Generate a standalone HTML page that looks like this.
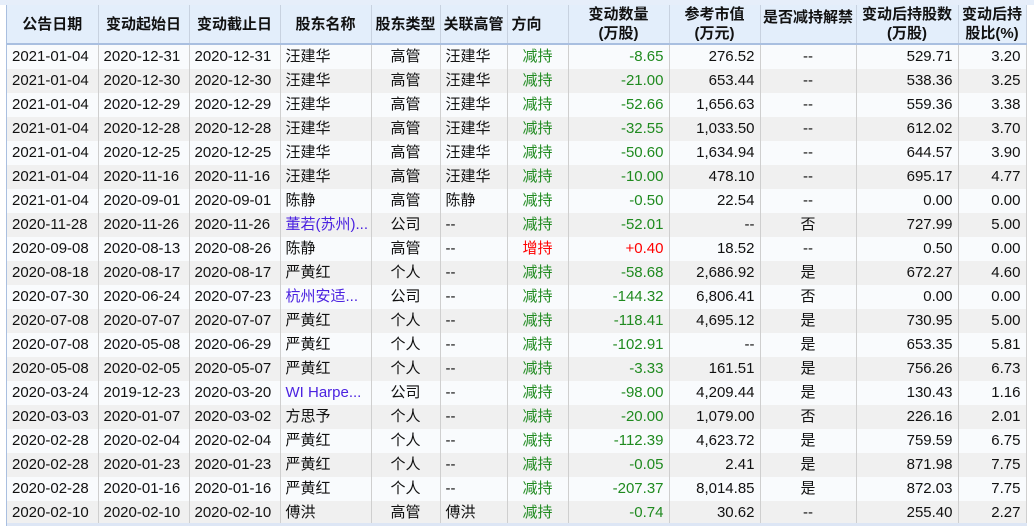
<!DOCTYPE html><html><head><meta charset="utf-8"><style>
body{margin:0;width:1034px;height:526px;overflow:hidden;background:#fff;font-family:"Liberation Sans","Noto Sans CJK SC",sans-serif;position:relative}
.top{position:absolute;left:0;top:0;width:1034px;height:5px;background:#e6eefa}
.bot{position:absolute;left:7px;top:523px;width:1020px;height:3px;background:#dde6f5}
.lb{position:absolute;left:0;top:5px;width:7px;height:521px;background:#fff;border-right:1px solid #a9bfe0;box-sizing:border-box}
table{position:absolute;left:7px;top:5px;border-collapse:collapse;table-layout:fixed;width:1019px;font-size:15px;color:#111}
th{height:36px;box-sizing:border-box;background:#e3eefb;font-weight:bold;font-size:15px;border-right:1px solid #c8d2e0;border-bottom:2px solid #a9bfe0;line-height:19px;padding:0;color:#111;white-space:nowrap;overflow:hidden}
td{height:24px;box-sizing:border-box;padding:0 5px;border-right:1px solid #cfcfcf;white-space:nowrap;overflow:hidden;line-height:24px}
tr:nth-child(odd) td{background:#f9fbfd}
tr:nth-child(even) td{background:#f0f0f0}
.c{text-align:center}.r{text-align:right}
.g{color:#1f8a1f}.rd{color:#f00}.b{color:#4b22e0}
</style></head><body>
<div class="top"></div><div class="lb"></div>
<table>
<colgroup><col style="width:91px"><col style="width:91px"><col style="width:91px"><col style="width:91px"><col style="width:69px"><col style="width:67px"><col style="width:61px"><col style="width:101px"><col style="width:91px"><col style="width:96px"><col style="width:102px"><col style="width:68px"></colgroup>
<thead><tr><th>公告日期</th><th>变动起始日</th><th>变动截止日</th><th>股东名称</th><th>股东类型</th><th>关联高管</th><th style="text-align:left;padding-left:4px">方向</th><th>变动数量<br>(万股)</th><th>参考市值<br>(万元)</th><th style="vertical-align:top;padding-top:3px">是否减持解禁</th><th>变动后持股数<br>(万股)</th><th>变动后持<br>股比(%)</th></tr></thead>
<tbody>
<tr><td>2021-01-04</td><td>2020-12-31</td><td>2020-12-31</td><td>汪建华</td><td class="c">高管</td><td>汪建华</td><td class="c g">减持</td><td class="r g">-8.65</td><td class="r">276.52</td><td class="c">--</td><td class="r">529.71</td><td class="r">3.20</td></tr>
<tr><td>2021-01-04</td><td>2020-12-30</td><td>2020-12-30</td><td>汪建华</td><td class="c">高管</td><td>汪建华</td><td class="c g">减持</td><td class="r g">-21.00</td><td class="r">653.44</td><td class="c">--</td><td class="r">538.36</td><td class="r">3.25</td></tr>
<tr><td>2021-01-04</td><td>2020-12-29</td><td>2020-12-29</td><td>汪建华</td><td class="c">高管</td><td>汪建华</td><td class="c g">减持</td><td class="r g">-52.66</td><td class="r">1,656.63</td><td class="c">--</td><td class="r">559.36</td><td class="r">3.38</td></tr>
<tr><td>2021-01-04</td><td>2020-12-28</td><td>2020-12-28</td><td>汪建华</td><td class="c">高管</td><td>汪建华</td><td class="c g">减持</td><td class="r g">-32.55</td><td class="r">1,033.50</td><td class="c">--</td><td class="r">612.02</td><td class="r">3.70</td></tr>
<tr><td>2021-01-04</td><td>2020-12-25</td><td>2020-12-25</td><td>汪建华</td><td class="c">高管</td><td>汪建华</td><td class="c g">减持</td><td class="r g">-50.60</td><td class="r">1,634.94</td><td class="c">--</td><td class="r">644.57</td><td class="r">3.90</td></tr>
<tr><td>2021-01-04</td><td>2020-11-16</td><td>2020-11-16</td><td>汪建华</td><td class="c">高管</td><td>汪建华</td><td class="c g">减持</td><td class="r g">-10.00</td><td class="r">478.10</td><td class="c">--</td><td class="r">695.17</td><td class="r">4.77</td></tr>
<tr><td>2021-01-04</td><td>2020-09-01</td><td>2020-09-01</td><td>陈静</td><td class="c">高管</td><td>陈静</td><td class="c g">减持</td><td class="r g">-0.50</td><td class="r">22.54</td><td class="c">--</td><td class="r">0.00</td><td class="r">0.00</td></tr>
<tr><td>2020-11-28</td><td>2020-11-26</td><td>2020-11-26</td><td class="b">董若(苏州)...</td><td class="c">公司</td><td>--</td><td class="c g">减持</td><td class="r g">-52.01</td><td class="r">--</td><td class="c">否</td><td class="r">727.99</td><td class="r">5.00</td></tr>
<tr><td>2020-09-08</td><td>2020-08-13</td><td>2020-08-26</td><td>陈静</td><td class="c">高管</td><td>--</td><td class="c rd">增持</td><td class="r rd">+0.40</td><td class="r">18.52</td><td class="c">--</td><td class="r">0.50</td><td class="r">0.00</td></tr>
<tr><td>2020-08-18</td><td>2020-08-17</td><td>2020-08-17</td><td>严黄红</td><td class="c">个人</td><td>--</td><td class="c g">减持</td><td class="r g">-58.68</td><td class="r">2,686.92</td><td class="c">是</td><td class="r">672.27</td><td class="r">4.60</td></tr>
<tr><td>2020-07-30</td><td>2020-06-24</td><td>2020-07-23</td><td class="b">杭州安适...</td><td class="c">公司</td><td>--</td><td class="c g">减持</td><td class="r g">-144.32</td><td class="r">6,806.41</td><td class="c">否</td><td class="r">0.00</td><td class="r">0.00</td></tr>
<tr><td>2020-07-08</td><td>2020-07-07</td><td>2020-07-07</td><td>严黄红</td><td class="c">个人</td><td>--</td><td class="c g">减持</td><td class="r g">-118.41</td><td class="r">4,695.12</td><td class="c">是</td><td class="r">730.95</td><td class="r">5.00</td></tr>
<tr><td>2020-07-08</td><td>2020-05-08</td><td>2020-06-29</td><td>严黄红</td><td class="c">个人</td><td>--</td><td class="c g">减持</td><td class="r g">-102.91</td><td class="r">--</td><td class="c">是</td><td class="r">653.35</td><td class="r">5.81</td></tr>
<tr><td>2020-05-08</td><td>2020-02-05</td><td>2020-05-07</td><td>严黄红</td><td class="c">个人</td><td>--</td><td class="c g">减持</td><td class="r g">-3.33</td><td class="r">161.51</td><td class="c">是</td><td class="r">756.26</td><td class="r">6.73</td></tr>
<tr><td>2020-03-24</td><td>2019-12-23</td><td>2020-03-20</td><td class="b">WI Harpe...</td><td class="c">公司</td><td>--</td><td class="c g">减持</td><td class="r g">-98.00</td><td class="r">4,209.44</td><td class="c">是</td><td class="r">130.43</td><td class="r">1.16</td></tr>
<tr><td>2020-03-03</td><td>2020-01-07</td><td>2020-03-02</td><td>方思予</td><td class="c">个人</td><td>--</td><td class="c g">减持</td><td class="r g">-20.00</td><td class="r">1,079.00</td><td class="c">否</td><td class="r">226.16</td><td class="r">2.01</td></tr>
<tr><td>2020-02-28</td><td>2020-02-04</td><td>2020-02-04</td><td>严黄红</td><td class="c">个人</td><td>--</td><td class="c g">减持</td><td class="r g">-112.39</td><td class="r">4,623.72</td><td class="c">是</td><td class="r">759.59</td><td class="r">6.75</td></tr>
<tr><td>2020-02-28</td><td>2020-01-23</td><td>2020-01-23</td><td>严黄红</td><td class="c">个人</td><td>--</td><td class="c g">减持</td><td class="r g">-0.05</td><td class="r">2.41</td><td class="c">是</td><td class="r">871.98</td><td class="r">7.75</td></tr>
<tr><td>2020-02-28</td><td>2020-01-16</td><td>2020-01-16</td><td>严黄红</td><td class="c">个人</td><td>--</td><td class="c g">减持</td><td class="r g">-207.37</td><td class="r">8,014.85</td><td class="c">是</td><td class="r">872.03</td><td class="r">7.75</td></tr>
<tr><td>2020-02-10</td><td>2020-02-10</td><td>2020-02-10</td><td>傅洪</td><td class="c">高管</td><td>傅洪</td><td class="c g">减持</td><td class="r g">-0.74</td><td class="r">30.62</td><td class="c">--</td><td class="r">255.40</td><td class="r">2.27</td></tr>
</tbody></table>
<div class="bot"></div>
</body></html>
